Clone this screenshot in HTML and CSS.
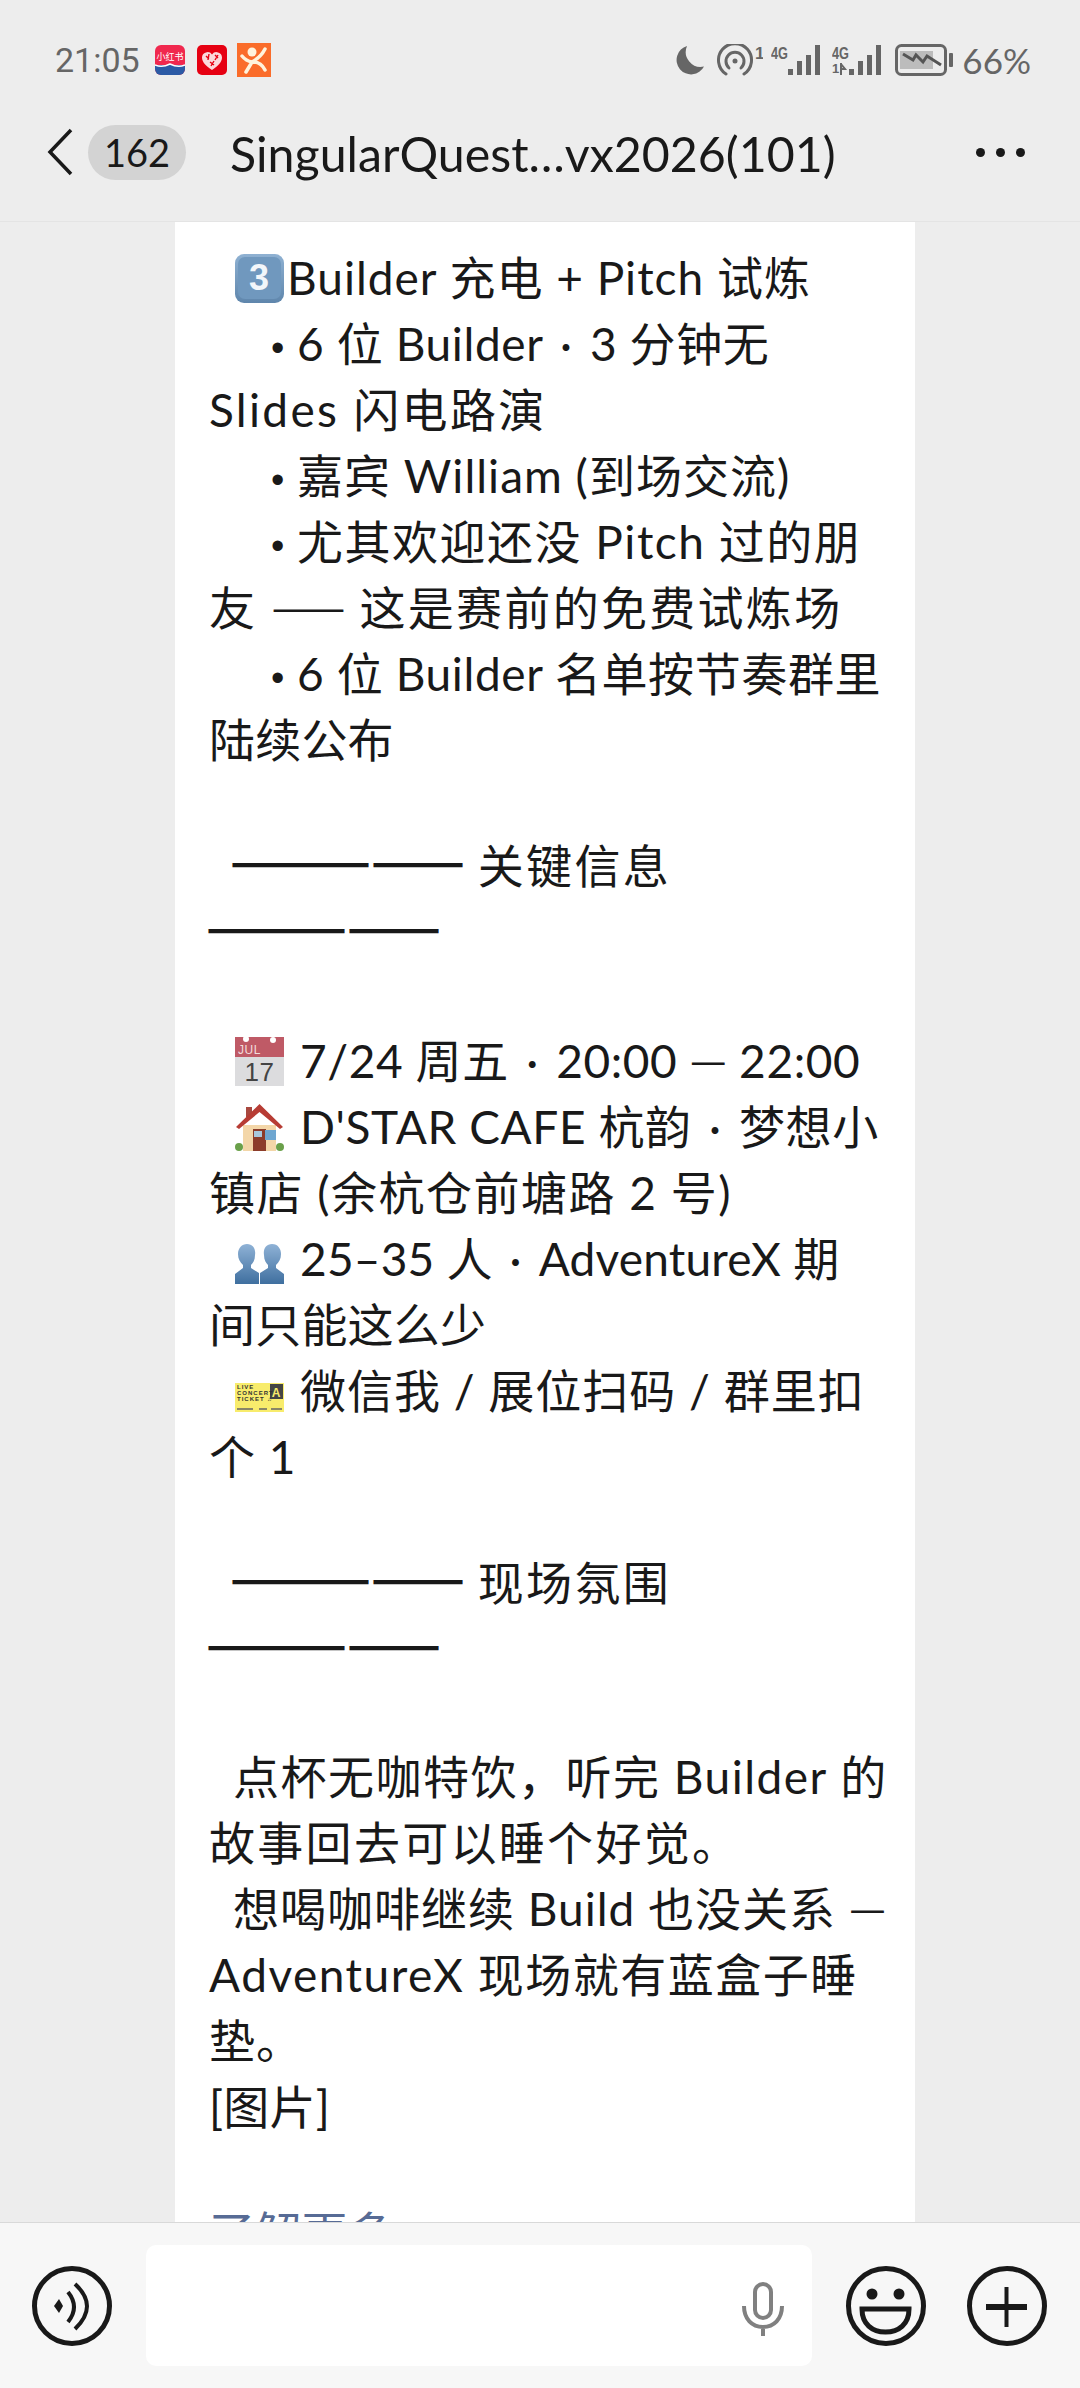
FILE: index.html
```html
<!DOCTYPE html>
<html lang="zh-CN">
<head>
    <meta charset="UTF-8">
    <meta name="viewport" content="width=device-width, initial-scale=1.0">
    <title>SingularQuest vx2026</title>
    <link rel="stylesheet" href="styles.css">
</head>
<body>

    <header class="top">
        <div class="status">
            <div class="status-left">
                <span class="time">21:05</span>
                <svg class="app-icon" viewBox="0 0 30 30">
                    <rect width="30" height="30" rx="6" fill="#f0284e"/>
                    <path d="M0 20h30v4a6 6 0 0 1-6 6H6a6 6 0 0 1-6-6z" fill="#2b5aa5"/>
                    <path d="M0 20q7 3 15-1q8 4 15 1" fill="none" stroke="#fff" stroke-width="1.5"/>
                    <text x="15" y="15" class="app-text">小红书</text>
                </svg>
                <svg class="app-icon" viewBox="0 0 30 30">
                    <rect width="30" height="30" rx="5" fill="#e60012"/>
                    <path d="M15 25C9 21 5 17 5 12.500A5.500 5.500 0 0 1 15 9.500A5.500 5.500 0 0 1 25 12.500C25 17 21 21 15 25Z" fill="#fbd9dc"/>
                    <path d="M9 11l3 3M12 9l-1 6M18 10l3 3M21 10l-3 5M13 17l4 3M17 16l-3 5" stroke="#e60012" stroke-width="1.400"/>
                </svg>
                <svg class="app-icon big" viewBox="0 0 34 34">
                    <rect width="34" height="34" fill="#fa6c2a"/>
                    <circle cx="15" cy="9" r="4.500" fill="#fff3dc"/>
                    <path d="M5 13q4 5 10 6M28 6q-4 8-13 13q-3 5-6 10M16 19q8 0 12 8" fill="none" stroke="#fff3dc" stroke-width="3.500" stroke-linecap="round"/>
                </svg>
            </div>
            <div class="status-right">
                <svg class="moon" viewBox="0 0 31 31"><path d="M13 1A14.500 14.500 0 1 0 30 21.500A15 15 0 0 1 13 1Z" fill="#666"/></svg>
                <svg class="hotspot" viewBox="0 0 46 32">
                    <g fill="none" stroke="#666" stroke-width="3" stroke-linecap="round">
                        <path d="M9 30A16.500 16.500 0 1 1 27 30"/>
                        <path d="M12 24A9 9 0 1 1 24 24"/>
                    </g>
                    <circle cx="18" cy="17" r="2.500" fill="#666"/>
                    <text x="38" y="15" class="sig-text">1</text>
                </svg>
                <svg class="signal" viewBox="0 0 49 32">
                    <text x="0" y="15" class="sig-text" textLength="17" lengthAdjust="spacingAndGlyphs">4G</text>
                    <rect x="17" y="25" width="5" height="6" fill="#666"/>
                    <rect x="26" y="17" width="5" height="14" fill="#666"/>
                    <rect x="35" y="11" width="5" height="20" fill="#666"/>
                    <rect x="44" y="1" width="5" height="30" fill="#666"/>
                </svg>
                <svg class="signal" viewBox="0 0 49 32">
                    <text x="0" y="15" class="sig-text" textLength="17" lengthAdjust="spacingAndGlyphs">4G</text>
                    <text x="0" y="29" class="sig-text small">1</text>
                    <path d="M9 19v12M9 20l4 5h-4" fill="none" stroke="#666" stroke-width="2"/>
                    <rect x="17" y="25" width="5" height="6" fill="#666"/>
                    <rect x="26" y="17" width="5" height="14" fill="#666"/>
                    <rect x="35" y="11" width="5" height="20" fill="#666"/>
                    <rect x="44" y="1" width="5" height="30" fill="#666"/>
                </svg>
                <svg class="battery" viewBox="0 0 59 32">
                    <rect x="1.500" y="1.500" width="49" height="29" rx="5" fill="none" stroke="#666" stroke-width="3"/>
                    <rect x="5" y="7" width="33" height="18" fill="#bcbcbc"/>
                    <path d="M8 10l10 6 3-5 7 7 4-6 14 9" fill="none" stroke="#555" stroke-width="3"/>
                    <rect x="54" y="9" width="4" height="14" rx="1" fill="#666"/>
                </svg>
                <span class="percent">66%</span>
            </div>
        </div>
        <div class="nav">
            <svg class="back" viewBox="0 0 26 48"><path d="M24 2L3 24l21 22" fill="none" stroke="#191919" stroke-width="3.500"/></svg>
            <span class="badge">162</span>
            <h1 class="title">SingularQuest…vx2026(101)</h1>
            <div class="more"><i></i><i></i><i></i></div>
        </div>
    </header>

    <main class="feed">
        <article class="card">
            <p class="in-emoji"><svg class="emoji key" viewBox="0 0 49 49">
                <defs><linearGradient id="keyfill" x1="0" y1="0" x2="0" y2="1"><stop offset="0" stop-color="#8fb1d2"/><stop offset="1" stop-color="#5f86ac"/></linearGradient></defs>
                <rect width="49" height="49" rx="9" fill="url(#keyfill)"/>
                <rect x="3" y="3" width="43" height="42" rx="7" fill="#7098be"/>
                <text x="24.500" y="36" class="key-text">3</text>
            </svg>Builder 充电 + Pitch 试炼</p>
            <p class="in-bullet"><span class="dot">•</span> <span class="snug">6 位 Builder <span class="sep">·</span> 3 分钟无</span><br><span class="wide">Slides 闪电路演</span></p>
            <p class="in-bullet"><span class="dot">•</span> 嘉宾 William (到场交流)</p>
            <p class="in-bullet"><span class="dot">•</span> <span class="loose">尤其欢迎还没 Pitch 过的朋</span><br><span class="wide">友 <span class="dash">——</span> 这是赛前的免费试炼场</span></p>
            <p class="in-bullet"><span class="dot">•</span> <span class="snug">6 位 Builder 名单按节奏群里</span><br><span class="tight">陆续公布</span></p>
            <p class="gap"></p>
            <p class="in-head"><span class="rule">—————</span> <span class="wide">关键信息</span><br><span class="rule">—————</span></p>
            <p class="gap after-rule"></p>
            <p class="in-emoji snug"><svg class="emoji sp" viewBox="0 0 49 49">
                <rect width="49" height="49" fill="#dcdcde"/>
                <path d="M0 0h49v20H0z" fill="#bf5a66"/>
                <circle cx="11" cy="2" r="3" fill="#fff"/>
                <circle cx="38" cy="3" r="3" fill="#fff"/>
                <text x="3" y="17" class="cal-month">JUL</text>
                <text x="24.500" y="44" class="cal-day">17</text>
            </svg>7/24 周五 <span class="sep">·</span> 20:00 <span class="dash">—</span> 22:00</p>
            <p class="in-emoji"><svg class="emoji sp" viewBox="0 0 49 49">
                <path d="M8 22h33v26H8z" fill="#f3d6a8"/>
                <path d="M11 4h6v10h-6z" fill="#a8483f"/>
                <path d="M1 24L24.500 1 48 24l-3 2L24.500 9 4 26z" fill="#b73c34"/>
                <path d="M18 26h13v22H18z" fill="#8c3c2a"/>
                <path d="M19 28h8v6h-8z" fill="#a8c8dc"/>
                <path d="M30 27h11v10H30z" fill="#6ea6d0"/>
                <circle cx="4" cy="44" r="4" fill="#6aa04a"/>
                <circle cx="45" cy="44" r="4" fill="#6aa04a"/>
            </svg><span class="snug">D'STAR CAFE 杭韵 <span class="sep">·</span> 梦想小</span><br><span class="loose">镇店 (余杭仓前塘路 2 号)</span></p>
            <p class="in-emoji tight"><svg class="emoji sp low" viewBox="0 0 49 40">
                <defs><linearGradient id="bust" x1="0" y1="0" x2="0" y2="1"><stop offset="0" stop-color="#8fb2d6"/><stop offset="1" stop-color="#3f6f9f"/></linearGradient></defs>
                <path d="M12 0c6 0 9 5 8 11c0 5-2 8-4 10v3l8 5v11H0V30l8-6v-3C5 18 3 15 3 10C3 4 7 0 12 0Z" fill="url(#bust)"/>
                <path d="M37 0c6 0 9 5 9 10c0 5-2 8-5 11v3l8 6v10H25V29l8-5v-3c-2-2-4-5-4-10C28 5 31 0 37 0Z" fill="url(#bust)"/>
            </svg>25–35 人 <span class="sep">·</span> AdventureX 期<br>间只能这么少</p>
            <p class="in-emoji"><svg class="emoji sp ticket" viewBox="0 0 49 29">
                <rect width="49" height="29" fill="#f8ec6c"/>
                <rect x="35" y="1" width="13" height="15" fill="#444"/>
                <text x="41.500" y="14" class="tk-a">A</text>
                <text x="2" y="6" class="tk-text">LIVE</text>
                <text x="2" y="12" class="tk-text">CONCERT</text>
                <text x="2" y="18" class="tk-text">TICKET ♫</text>
                <path d="M2 26h16M24 26h8M36 26h11" stroke="#666" stroke-width="1.500"/>
            </svg>微信我 / 展位扫码 / 群里扣<br>个 1</p>
            <p class="gap"></p>
            <p class="in-head"><span class="rule">—————</span> <span class="wide">现场氛围</span><br><span class="rule">—————</span></p>
            <p class="gap after-rule"></p>
            <p class="in-text"><span class="loose">点杯无咖特饮，听完 Builder 的</span><br><span class="wide">故事回去可以睡个好觉。</span></p>
            <p class="in-text">想喝咖啡继续 Build 也没关系 <span class="dash">—</span><br><span class="loose">AdventureX 现场就有蓝盒子睡</span><br>垫。</p>
            <p class="tight">[图片]</p>
            <p class="gap"></p>
            <a href="#" class="more-link">了解更多</a>
        </article>
    </main>

    <footer class="bar">
        <svg class="round" viewBox="0 0 80 80">
            <circle cx="40" cy="40" r="37.500" fill="none" stroke="#191919" stroke-width="5"/>
            <path d="M22 40l5-7 4 7-4 7z" fill="#191919"/>
            <path d="M36 26Q48 41 36 56M43 18Q67 40 43 63" fill="none" stroke="#191919" stroke-width="4"/>
        </svg>
        <div class="input">
            <svg class="mic" viewBox="0 0 42 54">
                <rect x="13" y="2" width="16" height="34" rx="8" fill="none" stroke="#808080" stroke-width="4"/>
                <path d="M2 24c0 13 8 21 19 21s19-8 19-21M21 45v9" fill="none" stroke="#808080" stroke-width="4"/>
            </svg>
        </div>
        <svg class="round" viewBox="0 0 80 80">
            <circle cx="40" cy="40" r="37.500" fill="none" stroke="#191919" stroke-width="5"/>
            <circle cx="26" cy="28" r="5.500" fill="#191919"/>
            <circle cx="53" cy="28" r="5.500" fill="#191919"/>
            <path d="M16 43h47c0 15-10 23-23.500 23S16 58 16 43Z" fill="none" stroke="#191919" stroke-width="5"/>
        </svg>
        <svg class="round" viewBox="0 0 80 80">
            <circle cx="40" cy="40" r="37.500" fill="none" stroke="#191919" stroke-width="5"/>
            <path d="M19 41h41" stroke="#191919" stroke-width="6"/>
            <path d="M39.500 21v40" stroke="#191919" stroke-width="4"/>
        </svg>
    </footer>

</body>
</html>
```

FILE: styles.css
```css
/* Page */
* {
    box-sizing: border-box;
}

body {
    font-family: Lato, "Noto Sans CJK SC", sans-serif;
    background: #ededed;
    color: #191919;
    margin: 0;
    width: 1080px;
    height: 2388px;
    display: flex;
    flex-direction: column;
    overflow: hidden;
}

/* Status bar and nav */
.top {
    height: 222px;
    flex: none;
    background: #ededed;
    border-bottom: 1px solid #e4e4e4;
}

.status {
    height: 122px;
    padding: 43px 49px 0 55px;
    display: flex;
    justify-content: space-between;
}

.status-left,
.status-right {
    height: 34px;
    display: flex;
    align-items: center;
}

.time {
    font-family: Roboto, sans-serif;
    font-size: 34px;
    color: #666;
    width: 100px;
}

.app-icon {
    width: 30px;
    height: 30px;
    margin-right: 12px;
}

.app-icon.big {
    width: 34px;
    height: 34px;
    margin-left: -2px;
}

.app-text {
    font-size: 9px;
    fill: #fff;
    text-anchor: middle;
    font-family: "Noto Sans CJK SC", sans-serif;
}

.sig-text {
    font-family: "Liberation Sans", sans-serif;
    font-size: 17px;
    font-weight: 700;
    fill: #666;
}

.sig-text.small {
    font-size: 13px;
}

.moon {
    width: 31px;
    height: 31px;
    margin-right: 12px;
}

.hotspot {
    width: 46px;
    height: 32px;
    margin-right: 8px;
}

.signal {
    width: 49px;
    height: 32px;
    margin-right: 12px;
}

.signal + .signal {
    margin-right: 14px;
}

.battery {
    width: 59px;
    height: 32px;
    margin-right: 8px;
}

.percent {
    font-family: Lato, sans-serif;
    font-size: 35px;
    color: #666;
}

.nav {
    height: 60px;
    padding-left: 47px;
    display: flex;
    align-items: center;
    position: relative;
}

.back {
    width: 26px;
    height: 48px;
    margin-right: 15px;
}

.badge {
    width: 98px;
    height: 55px;
    border-radius: 28px;
    background: #d3d3d3;
    font-size: 38px;
    display: flex;
    align-items: center;
    justify-content: center;
    margin-right: 44px;
}

.title {
    margin: 2px 0 0;
    font-size: 48.300px;
    font-weight: 400;
    white-space: nowrap;
}

.more {
    position: absolute;
    right: 55px;
    top: 26px;
    display: flex;
    gap: 11px;
}

.more i {
    display: block;
    width: 9px;
    height: 9px;
    border-radius: 50%;
    background: #191919;
}

/* Message card */
.feed {
    flex: 1;
    min-height: 0;
    padding-left: 175px;
    overflow: hidden;
}

.card {
    width: 740px;
    min-height: 100%;
    background: #fff;
    padding: 23px 0 0 34px;
    font-size: 46px;
    line-height: 66px;
    letter-spacing: 1px;
    white-space: nowrap;
}

.card p {
    margin: 0;
}

.card .gap {
    height: 60px;
}

.card .gap.after-rule {
    height: 62.500px;
}

.in-emoji {
    text-indent: 26px;
}

.in-bullet {
    text-indent: 62px;
}

.in-head,
.in-text {
    text-indent: 24px;
}

/* wrapped lines in the reference are spaced a little differently */
.tight {
    letter-spacing: 0.200px;
}

.snug {
    letter-spacing: 0.600px;
}

.loose {
    letter-spacing: 1.500px;
}

.wide {
    letter-spacing: 2.300px;
}

.dot {
    font-family: "Liberation Sans", sans-serif;
    font-size: 38px;
    line-height: 1;
    letter-spacing: 0;
}

.sep {
    margin: 0 5px;
}

.dash {
    font-family: "Noto Sans CJK SC", sans-serif;
    font-size: 37px;
    line-height: 1;
    letter-spacing: 0;
    -webkit-text-stroke: 1px #191919;
}

.rule {
    font-family: "Noto Sans CJK SC", sans-serif;
    font-size: 47px;
    font-weight: 700;
    line-height: 1;
    letter-spacing: 0;
    margin-left: -3px;
    -webkit-text-stroke: 2px #191919;
}

.emoji {
    width: 49px;
    height: 49px;
    vertical-align: -8px;
}

.emoji.key {
    margin-right: 3px;
}

.emoji.sp {
    margin-right: 16px;
}

.emoji.low {
    height: 40px;
}

.emoji.ticket {
    height: 29px;
    vertical-align: -4px;
}

.key-text {
    font-family: "Liberation Sans", sans-serif;
    font-size: 36px;
    font-weight: 700;
    fill: #f2f6fa;
    text-anchor: middle;
}

.cal-month {
    font-family: "Liberation Sans", sans-serif;
    font-size: 12px;
    fill: #f3dcdc;
}

.cal-day {
    font-family: "Liberation Sans", sans-serif;
    font-size: 26px;
    fill: #444;
    text-anchor: middle;
}

.tk-text {
    font-family: "Liberation Sans", sans-serif;
    font-size: 6px;
    font-weight: 700;
    fill: #333;
}

.tk-a {
    font-family: "Liberation Sans", sans-serif;
    font-size: 12px;
    font-weight: 700;
    fill: #f8ec6c;
    text-anchor: middle;
}

.more-link {
    color: #576b95;
    text-decoration: none;
    letter-spacing: 0.200px;
}

/* Bottom input bar */
.bar {
    height: 166px;
    flex: none;
    background: #f7f7f7;
    border-top: 1px solid #d9d9d9;
    padding: 22px 33px 0 32px;
    display: flex;
    align-items: flex-start;
}

.round {
    width: 80px;
    height: 80px;
    flex: none;
    margin-top: 21px;
}

.input {
    width: 667px;
    height: 121px;
    margin: 0 34px;
    background: #fff;
    border-radius: 10px;
    display: flex;
    align-items: center;
    justify-content: flex-end;
    padding: 0 28px 0 0;
}

.input + .round + .round {
    margin-left: 41px;
}

.mic {
    width: 42px;
    height: 54px;
    margin-top: 7px;
}
```
